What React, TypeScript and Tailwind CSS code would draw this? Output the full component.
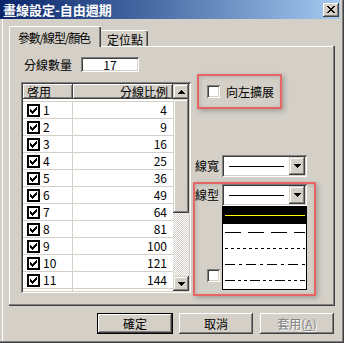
import React from "react";

const RAISED =
  "shadow-[inset_-1px_-1px_#404040,inset_1px_1px_#ffffff,inset_-2px_-2px_#808080,inset_2px_2px_#d4d0c8]";
const SBTN =
  "shadow-[inset_-1px_-1px_#404040,inset_1px_1px_#d4d0c8,inset_-2px_-2px_#808080,inset_2px_2px_#ffffff]";
const SUNKEN =
  "shadow-[inset_1px_1px_#808080,inset_-1px_-1px_#ffffff,inset_2px_2px_#404040,inset_-2px_-2px_#d4d0c8]";

const CHECK = ["......X", ".....XX", "X...XXX", "XX.XXX.", "XXXXX..", ".XXX...", "..X...."];

function CheckMark() {
  return (
    <svg width="7" height="7" viewBox="0 0 7 7" shapeRendering="crispEdges">
      {CHECK.flatMap((row, y) =>
        row
          .split("")
          .map((c, x) =>
            c === "X" ? <rect key={`${x}-${y}`} x={x} y={y} width="1" height="1" fill="#000" /> : null
          )
      )}
    </svg>
  );
}

function ArrowDown() {
  return (
    <svg width="7" height="4" viewBox="0 0 7 4" shapeRendering="crispEdges">
      <rect x="0" y="0" width="7" height="1" fill="#000" />
      <rect x="1" y="1" width="5" height="1" fill="#000" />
      <rect x="2" y="2" width="3" height="1" fill="#000" />
      <rect x="3" y="3" width="1" height="1" fill="#000" />
    </svg>
  );
}

function ArrowUp() {
  return (
    <svg width="7" height="4" viewBox="0 0 7 4" shapeRendering="crispEdges">
      <rect x="3" y="0" width="1" height="1" fill="#000" />
      <rect x="2" y="1" width="3" height="1" fill="#000" />
      <rect x="1" y="2" width="5" height="1" fill="#000" />
      <rect x="0" y="3" width="7" height="1" fill="#000" />
    </svg>
  );
}

function GridCheck() {
  return (
    <div className="w-[13px] h-[13px] border-2 border-black bg-white flex items-center justify-center shrink-0">
      <CheckMark />
    </div>
  );
}

function ClassicCheck() {
  return <div className={`w-[13px] h-[13px] bg-white shrink-0 ${SUNKEN}`} />;
}

function Combo({ children }: { children?: React.ReactNode }) {
  return (
    <div className={`relative w-[85px] h-[22px] p-[2px] bg-white ${SUNKEN}`}>
      <div className="flex h-full">
        <div className="flex-1 flex items-center pl-[5px]">
          <div className="w-[55px] h-px bg-black" />
        </div>
        <div className={`w-[16px] h-full bg-[#d4d0c8] ${SBTN} flex items-center justify-center`}>
          <ArrowDown />
        </div>
      </div>
      {children}
    </div>
  );
}

function DashLine({ dash }: { dash: string }) {
  return (
    <svg width="80" height="2" viewBox="0 0 80 2" shapeRendering="crispEdges">
      <line x1="0" y1="1" x2="80" y2="1" stroke="#000" strokeWidth="1" strokeDasharray={dash} />
    </svg>
  );
}

const rows = [1, 2, 3, 4, 5, 6, 7, 8, 9, 10, 11];

export default function App() {
  return (
    <div className="w-[344px] h-[343px] bg-[#d4d0c8] relative overflow-hidden flex flex-col font-['Noto_Sans_CJK_TC','Noto_Sans_CJK_JP',sans-serif] text-[12px] leading-none text-black shadow-[inset_-1px_-1px_#404040,inset_-2px_-2px_#808080,inset_2px_0_#d4d0c8,inset_3px_0_#ffffff]">
      {/* Title bar */}
      <div className="w-[340px] h-[19px] shrink-0 bg-gradient-to-r from-[#0a246a] to-[#a6caf0] flex items-center justify-between pl-[3px]">
        <span className="text-white font-bold text-[13px] leading-none">畫線設定-自由週期</span>
        <div className={`w-[16px] h-[14px] mr-[1px] bg-[#d4d0c8] ${RAISED} flex items-center justify-center`}>
          <svg width="8" height="7" viewBox="0 0 8 7" shapeRendering="crispEdges">
            <path d="M0 0h2v1h-2zM6 0h2v1h-2zM1 1h2v1h-2zM5 1h2v1h-2zM2 2h4v1h-4zM3 3h2v1h-2zM2 4h4v1h-4zM1 5h2v1h-2zM5 5h2v1h-2zM0 6h2v1h-2zM6 6h2v1h-2z" fill="#000" />
          </svg>
        </div>
      </div>

      {/* Tabs */}
      <div className="mt-[7px] ml-[9px] flex items-end h-[20px] shrink-0">
        <div className="relative z-10 w-[92px] h-[21px] -mb-[1px] bg-[#d4d0c8] border-l border-t border-white rounded-tl-[2px] shadow-[inset_-1px_0_#404040,inset_-2px_0_#808080] pl-[8px] pt-[5px] tracking-[-1.2px] whitespace-nowrap">
          參數/線型/顏色
        </div>
        <div className="w-[47px] h-[16px] bg-[#d4d0c8] border-t border-white rounded-tr-[2px] shadow-[inset_-1px_0_#404040,inset_-2px_0_#808080] pl-[6px] pt-[3px] whitespace-nowrap">
          定位點
        </div>
      </div>

      {/* Panel */}
      <div className="ml-[9px] w-[326px] h-[260px] shrink-0 shadow-[inset_-1px_-1px_#404040,inset_-2px_-2px_#808080,inset_1px_1px_#ffffff] flex">
        {/* Left column */}
        <div className="ml-[12px] w-[170px] flex flex-col">
          <div className="mt-[11px] h-[15px] flex items-center">
            <span className="ml-[3px]">分線數量</span>
            <div className={`ml-[9px] w-[58px] h-[15px] bg-white ${SUNKEN} flex items-center justify-center`}>17</div>
          </div>
          <div className={`mt-[10px] w-[170px] h-[211px] p-[2px] ${SUNKEN} flex`}>
            <div className="w-[150px] h-full bg-white overflow-hidden flex flex-col">
              <div className="flex h-[17px] shrink-0">
                <div className={`w-[50px] h-[15px] bg-[#d4d0c8] ${RAISED} pl-[4px] flex items-center`}>啓用</div>
                <div className={`w-[100px] h-[15px] bg-[#d4d0c8] ${RAISED} pr-[5px] flex items-center justify-end`}>分線比例</div>
              </div>
              {rows.map((n) => (
                <div key={n} className="flex h-[17px] shrink-0 border-t border-[#d4d0c8]">
                  <div className="w-[50px] border-r border-[#d4d0c8] flex items-center pl-[4px] gap-[3px]">
                    <GridCheck />
                    <span>{n}</span>
                  </div>
                  <div className="w-[100px] flex items-center justify-end pr-[6px]">{(n + 1) * (n + 1)}</div>
                </div>
              ))}
              <div className="flex h-[17px] shrink-0 border-t border-[#d4d0c8]">
                <div className="w-[50px] border-r border-[#d4d0c8] flex items-start pl-[4px] pt-[2px]">
                  <div className="w-[13px] h-[13px] border-2 border-black bg-white" />
                </div>
                <div className="w-[100px]" />
              </div>
            </div>
            <div className="w-[16px] h-full flex flex-col">
              <div className={`h-[15px] shrink-0 bg-[#d4d0c8] ${SBTN} flex items-center justify-center`}>
                <ArrowUp />
              </div>
              <div className={`h-[114px] shrink-0 bg-[#d4d0c8] ${SBTN}`} />
              <div className="flex-1 bg-[image:repeating-conic-gradient(#d4d0c8_0%_25%,#ffffff_0%_50%)] bg-[length:2px_2px]" />
              <div className={`h-[15px] shrink-0 bg-[#d4d0c8] ${SBTN} flex items-center justify-center`}>
                <ArrowDown />
              </div>
            </div>
          </div>
        </div>

        {/* Right column */}
        <div className="ml-[2px] flex flex-col">
          <div className="mt-[39px] ml-[14px] h-[13px] flex items-center gap-[6px]">
            <ClassicCheck />
            <span>向左擴展</span>
          </div>
          <div className="mt-[57px] flex items-center">
            <span className="ml-[2px] w-[24px]">線寬</span>
            <div className="ml-[3px]">
              <Combo />
            </div>
          </div>
          <div className="mt-[7px] flex items-center">
            <span className="ml-[2px] w-[24px]">線型</span>
            <div className="ml-[3px]">
              <Combo>
                <div className="absolute left-0 top-full w-[85px] h-[84px] border border-black bg-white z-20 flex flex-col">
                  <div className="h-[17px] bg-black flex items-center pl-[2px]">
                    <div className="w-[80px] h-px bg-[#ffff00]" />
                  </div>
                  <div className="h-[16px] flex items-center pl-[2px]">
                    <DashLine dash="16 7" />
                  </div>
                  <div className="h-[16px] flex items-center pl-[2px]">
                    <DashLine dash="3 3" />
                  </div>
                  <div className="h-[16px] flex items-center pl-[2px]">
                    <DashLine dash="10 4 3 4" />
                  </div>
                  <div className="h-[16px] flex items-center pl-[2px]">
                    <DashLine dash="10 3 3 3 3 3" />
                  </div>
                </div>
              </Combo>
            </div>
          </div>
          <div className="mt-[63px] ml-[14px]">
            <ClassicCheck />
          </div>
        </div>
      </div>

      {/* Buttons */}
      <div className="mt-[7px] ml-[97px] flex shrink-0">
        <div className="w-[76px] h-[21px] border border-black">
          <div className={`w-full h-full ${RAISED} flex items-center justify-center`}>確定</div>
        </div>
        <div className={`ml-[6px] w-[74px] h-[21px] ${RAISED} flex items-center justify-center`}>取消</div>
        <div className={`ml-[7px] w-[74px] h-[21px] ${RAISED} flex items-center justify-center text-[#808080] [text-shadow:1px_1px_#ffffff]`}>
          套用(<span className="underline">A</span>)
        </div>
      </div>

      {/* Annotation boxes */}
      <div className="absolute left-[197px] top-[74px] w-[85px] h-[35px] border-2 border-[#e86464] shadow-[2px_2px_5px_rgba(0,0,0,0.25),inset_1px_1px_4px_rgba(0,0,0,0.15)] z-30 pointer-events-none" />
      <div className="absolute left-[193px] top-[182px] w-[123px] h-[114px] border-2 border-[#e86464] shadow-[2px_2px_5px_rgba(0,0,0,0.25),inset_1px_1px_4px_rgba(0,0,0,0.15)] z-30 pointer-events-none" />
    </div>
  );
}
